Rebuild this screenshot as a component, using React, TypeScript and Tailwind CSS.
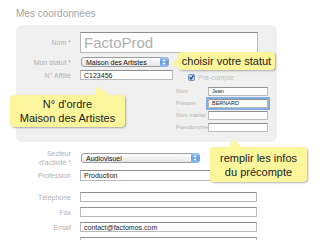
import React from 'react';

const boxCls =
  'bg-white border border-[#b9b9b9] border-t-[#8f8f8f] leading-none text-[#222] flex items-center pl-[3px]';
const inputCls = `${boxCls} text-[7px]`;

function Stepper() {
  return (
    <svg width="8" height="10" viewBox="0 0 8 10" className="shrink-0">
      <defs>
        <linearGradient id="stp" x1="0" y1="0" x2="0" y2="1">
          <stop offset="0" stopColor="#a9cdf5" />
          <stop offset="0.5" stopColor="#5a9be6" />
          <stop offset="1" stopColor="#8fc0f2" />
        </linearGradient>
      </defs>
      <rect x="0" y="0" width="8" height="10" rx="2" fill="url(#stp)" />
      <path d="M2.2 4.2 L4 2.2 L5.8 4.2 Z" fill="#fff" />
      <path d="M2.2 5.8 L4 7.8 L5.8 5.8 Z" fill="#fff" />
    </svg>
  );
}

function Select({ value, width }: { value: string; width: string }) {
  return (
    <div
      className={`${width} h-[10px] flex items-center justify-between rounded-[3px] border border-[#9d9d9d] bg-gradient-to-b from-white to-[#e6e6e6] pl-[4px] text-[7px] leading-none text-[#111]`}
    >
      <span>{value}</span>
      <Stepper />
    </div>
  );
}

function Label({ children }: { children: React.ReactNode }) {
  return (
    <div className="w-[55px] mr-[9px] text-right text-[7px] leading-[9px] text-[#b3b3b3]">
      {children}
    </div>
  );
}

function SubRow({ label, value, focus }: { label: string; value?: string; focus?: boolean }) {
  return (
    <div className="flex items-center h-[9px]">
      <div className="w-[32px] text-[5.5px] leading-none text-[#b3b3b3]">{label}</div>
      <div
        className={`w-[60px] h-[9px] ${boxCls} text-[5.5px] ${
          focus ? 'ring-2 ring-[#84aee0] border-[#6f95c6]' : ''
        }`}
      >
        {value}
      </div>
    </div>
  );
}

function Row({ label, value }: { label: string; value?: string }) {
  return (
    <div className="flex items-center h-[10px]">
      <Label>{label}</Label>
      <div className={`w-[177px] h-[10px] ${inputCls}`}>{value}</div>
    </div>
  );
}

const bubble =
  'absolute bg-[#fbf59b] rounded-[4px] shadow-[1px_1px_2px_rgba(0,0,0,0.3)] text-[11px] leading-[14px] text-[#222] text-center flex flex-col items-center justify-center';

export default function App() {
  return (
    <div className="relative w-[320px] h-[240px] overflow-hidden bg-white font-['Liberation_Sans',Arial,sans-serif]">
      <div className="pl-[16px] pt-[8px] text-[10px] leading-[12px] text-[#a3a3a3]">Mes coordonnées</div>

      <div className="ml-[16px] mt-[5px] w-[261px] h-[117px] rounded-[6px] bg-[#f0f0f0] pt-[7px]">
        <div className="flex items-center h-[21px]">
          <Label>Nom *</Label>
          <div className="w-[178px] h-[21px] bg-white border border-[#b9b9b9] border-t-[#8f8f8f] pl-[3px] flex items-center text-[15px] leading-none text-[#b0b0b0]">
            FactoProd
          </div>
        </div>
        <div className="flex items-center h-[10px] mt-[4px]">
          <Label>Mon statut *</Label>
          <div className="ml-[1px]">
            <Select value="Maison des Artistes" width="w-[88px]" />
          </div>
        </div>
        <div className="flex items-center h-[10px] mt-[3px]">
          <Label>N° Affilié</Label>
          <div className={`w-[93px] h-[10px] ${inputCls}`}>C123456</div>
          <div className="ml-[15px] mt-[5px] flex items-center">
            <svg width="7" height="7" viewBox="0 0 7 7">
              <rect x="0.5" y="0.5" width="6" height="6" rx="1" fill="#b9d3f1" stroke="#6f93c0" />
              <path d="M1.6 3.4 L3 5 L5.6 1.4" fill="none" stroke="#1e3f78" strokeWidth="1.2" />
            </svg>
            <span className="ml-[3px] text-[7px] leading-none text-[#c4c4c4]">Pré-compte</span>
          </div>
        </div>
        <div className="ml-[160px] mt-[7px] flex flex-col gap-[3px]">
          <SubRow label="Nom" value="Jean" />
          <SubRow label="Prénom" value="BERNARD" focus />
          <SubRow label="Nom marital" />
          <SubRow label="Pseudonyme" />
        </div>
      </div>

      <div className="pl-[16px]">
        <div className="flex items-center h-[18px] mt-[7px]">
          <Label>
            Secteur
            <br />
            d'activité *
          </Label>
          <div className="ml-[1px]">
            <Select value="Audiovisuel" width="w-[119px]" />
          </div>
        </div>
        <div className="flex items-center h-[11px] mt-[3px]">
          <Label>Profession</Label>
          <div className={`w-[177px] h-[11px] ${inputCls}`}>Production</div>
        </div>
        <div className="mt-[11px] flex flex-col gap-[5px]">
          <Row label="Téléphone" />
          <Row label="Fax" />
          <Row label="Email" value="contact@factomos.com" />
          <Row label="Site Web" />
        </div>
      </div>

      <div className={`${bubble} left-[178px] top-[52px] w-[97px] h-[18px]`}>
        <svg width="8" height="10" viewBox="0 0 8 10" className="absolute left-[-7px] top-[5px]">
          <path d="M8 0 L0 8 L8 9 Z" fill="#fbf59b" />
        </svg>
        choisir votre statut
      </div>

      <div className={`${bubble} left-[10px] top-[95px] w-[115px] h-[32px]`}>
        <svg width="16" height="10" viewBox="0 0 16 10" className="absolute left-[85px] top-[-9px]">
          <path d="M2 0 L0 10 L15 10 Z" fill="#fbf59b" />
        </svg>
        <div>N° d'ordre</div>
        <div>Maison des Artistes</div>
      </div>

      <div className={`${bubble} left-[210px] top-[147px] w-[97px] h-[35px]`}>
        <svg width="16" height="9" viewBox="0 0 16 9" className="absolute left-[18px] top-[-8px]">
          <path d="M5 0 L1 9 L15 9 Z" fill="#fbf59b" />
        </svg>
        <div>remplir les infos</div>
        <div>du précompte</div>
      </div>
    </div>
  );
}
